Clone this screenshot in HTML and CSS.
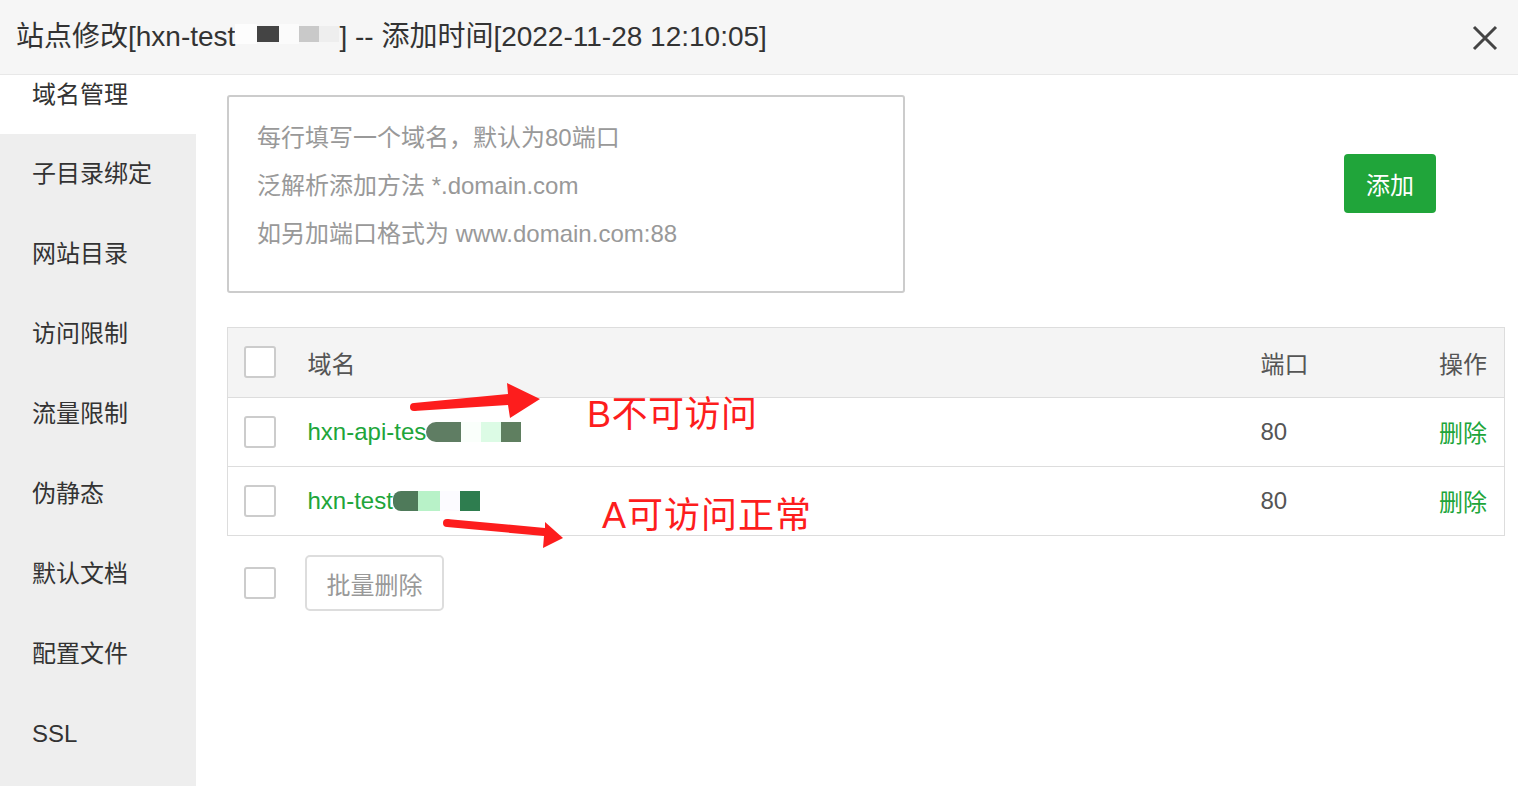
FILE: index.html
```html
<!DOCTYPE html>
<html lang="zh-CN">
<head>
    <meta charset="UTF-8">
    <meta name="viewport" content="width=device-width, initial-scale=1.0">
    <link rel="stylesheet" href="styles.css">
    <title>站点修改</title>
</head>
<body class="page">

<div class="dialog">
    <div class="dialog-head">
        <div class="dialog-title">站点修改[hxn-test<span class="blur blur-title"><i class="px px-w"></i><i class="px px-dark"></i><i class="px px-gap"></i><i class="px px-grey"></i><i class="px px-light"></i></span>] -- 添加时间[2022-11-28 12:10:05]</div>
        <span class="close-btn">
            <svg width="26" height="26" viewBox="0 0 26 26"><path d="M2 2 L24 24 M24 2 L2 24" stroke="#444" stroke-width="3" fill="none"/></svg>
        </span>
    </div>

    <div class="dialog-body">
        <div class="side">
            <div class="side-item active">域名管理</div>
            <div class="side-item">子目录绑定</div>
            <div class="side-item">网站目录</div>
            <div class="side-item">访问限制</div>
            <div class="side-item">流量限制</div>
            <div class="side-item">伪静态</div>
            <div class="side-item">默认文档</div>
            <div class="side-item">配置文件</div>
            <div class="side-item">SSL</div>
        </div>

        <div class="main">
            <div class="add-row">
                <div class="domain-input">
                    <p>每行填写一个域名，默认为80端口</p>
                    <p>泛解析添加方法 *.domain.com</p>
                    <p>如另加端口格式为 www.domain.com:88</p>
                </div>
                <button class="btn-add">添加</button>
            </div>

            <table class="domain-table">
                <thead>
                    <tr>
                        <th class="col-check"><span class="checkbox"></span></th>
                        <th>域名</th>
                        <th class="col-port">端口</th>
                        <th class="col-op">操作</th>
                    </tr>
                </thead>
                <tbody>
                    <tr>
                        <td class="col-check"><span class="checkbox"></span></td>
                        <td><span class="link">hxn-api-tes</span><span class="blur"><i class="px px-a1"></i><i class="px px-a2"></i><i class="px px-a3"></i><i class="px px-a4"></i></span></td>
                        <td class="col-port">80</td>
                        <td class="col-op"><span class="link">删除</span></td>
                    </tr>
                    <tr>
                        <td class="col-check"><span class="checkbox"></span></td>
                        <td><span class="link">hxn-test</span><span class="blur"><i class="px px-b1"></i><i class="px px-b2"></i><i class="px px-b3"></i><i class="px px-b4"></i></span></td>
                        <td class="col-port">80</td>
                        <td class="col-op"><span class="link">删除</span></td>
                    </tr>
                </tbody>
            </table>

            <div class="table-foot">
                <span class="checkbox"></span>
                <button class="btn-batch">批量删除</button>
            </div>

            <!-- screenshot annotations -->
            <svg class="marks" width="1322" height="711" viewBox="196 75 1322 711">
                <path d="M414 403 L508 394 L507 383 L540 399 L510 418 L508 405 L414 411 Z" fill="#fd1d1d"/>
                <circle cx="414" cy="407" r="4" fill="#fd1d1d"/>
                <path d="M447 519 L545 528 L545 522 L563 538 L543 548 L544 536 L447 527 Z" fill="#fd1d1d"/>
                <circle cx="447" cy="523" r="4" fill="#fd1d1d"/>
            </svg>
            <div class="note note-b">B不可访问</div>
            <div class="note note-a">A可访问正常</div>
        </div>
    </div>
</div>

</body>
</html>
```

FILE: styles.css
```css
.page {
    margin: 0;
    background-color: #fff;
    font-family: "Liberation Sans", "Noto Sans CJK SC", sans-serif;
    color: #333;
}

.dialog {
    display: flex;
    flex-direction: column;
    height: 100vh;
    overflow: hidden;
}

.dialog-head {
    height: 74px;
    display: flex;
    align-items: center;
    justify-content: space-between;
    padding: 0 20px 0 16px;
    background-color: #f6f6f6;
    border-bottom: 1px solid #e8e8e8;
    flex-shrink: 0;
}

.dialog-title {
    font-size: 28px;
    color: #333;
    display: flex;
    align-items: center;
    white-space: pre;
    margin-bottom: 6px;
}

.close-btn {
    display: flex;
    margin-top: 2px;
}

.blur {
    display: inline-flex;
    align-items: center;
    height: 22px;
}

.px {
    display: inline-block;
    height: 20px;
}

.px-w { width: 22px; background-color: #fdfdfd; }
.px-dark { width: 22px; height: 16px; background-color: #444; }
.px-gap { width: 20px; background-color: #fbfbfb; }
.px-grey { width: 20px; height: 16px; background-color: #c9c9c9; }
.px-light { width: 20px; height: 16px; background-color: #eeeeee; }

.px-a1 { width: 35px; background-color: #5f7d63; border-radius: 10px 0 0 10px; }
.px-a2 { width: 20px; background-color: #fafffb; }
.px-a3 { width: 20px; background-color: #dcfbe5; }
.px-a4 { width: 20px; background-color: #5f7f60; }

.px-b1 { width: 25px; background-color: #4f7a5a; border-radius: 8px 0 0 8px; }
.px-b2 { width: 22px; background-color: #b8f2c8; }
.px-b3 { width: 20px; background-color: #fcfbff; }
.px-b4 { width: 20px; background-color: #2e7d4f; }

.dialog-body {
    display: flex;
    flex: 1;
}

.side {
    width: 196px;
    background-color: #eeeeee;
    flex-shrink: 0;
}

.side-item {
    height: 80px;
    line-height: 80px;
    padding-left: 32px;
    font-size: 24px;
    color: #333;
}

.side-item.active {
    height: 59px;
    line-height: 39px;
    background-color: #fff;
}

.main {
    flex: 1;
    position: relative;
    padding: 20px 13px 0 31px;
}

.add-row {
    display: flex;
    align-items: flex-start;
}

.domain-input {
    width: 678px;
    height: 198px;
    box-sizing: border-box;
    border: 2px solid #cccccc;
    border-radius: 3px;
    padding: 17px 28px;
    font-size: 24px;
    color: #999;
}

.domain-input p {
    margin: 0;
    height: 48px;
    line-height: 48px;
}

.btn-add {
    margin: 59px 0 0 439px;
    width: 92px;
    height: 59px;
    border: none;
    border-radius: 4px;
    background-color: #20a53a;
    color: #fff;
    font-size: 24px;
    font-family: inherit;
    cursor: pointer;
}

.domain-table {
    width: 100%;
    margin-top: 34px;
    border-collapse: collapse;
    border: 1px solid #dddddd;
    font-size: 24px;
    table-layout: fixed;
}

.domain-table th {
    height: 69px;
    background-color: #f4f4f4;
    font-weight: normal;
    text-align: left;
    color: #555;
    padding: 0 16px;
}

.domain-table td {
    height: 68px;
    border-top: 1px solid #dddddd;
    padding: 0 16px;
    color: #555;
}

.domain-table .col-check {
    width: 64px;
    box-sizing: border-box;
    padding-right: 0;
}

.domain-table .col-port {
    width: 130px;
    box-sizing: border-box;
}

.domain-table .col-op {
    width: 130px;
    box-sizing: border-box;
    text-align: right;
    padding-right: 17px;
}

.domain-table td:nth-child(2) {
    display: flex;
    align-items: center;
}

.checkbox {
    display: block;
    width: 32px;
    height: 32px;
    box-sizing: border-box;
    border: 2px solid #cccccc;
    border-radius: 3px;
    background-color: #fff;
}

.link {
    color: #20a53a;
}

.table-foot {
    display: flex;
    align-items: center;
    margin-top: 19px;
    padding-left: 17px;
}

.btn-batch {
    margin-left: 29px;
    width: 139px;
    height: 56px;
    border: 2px solid #dddddd;
    border-radius: 5px;
    background-color: #fff;
    color: #999;
    font-size: 24px;
    font-family: inherit;
}

.marks {
    position: absolute;
    left: 0;
    top: 0;
    pointer-events: none;
}

.note {
    position: absolute;
    color: #fd1d1d;
    font-size: 36px;
    line-height: 40px;
}

.note-b {
    left: 391px;
    top: 320px;
    letter-spacing: 0.5px;
}

.note-a {
    left: 406px;
    top: 421px;
    letter-spacing: 1px;
}
```
